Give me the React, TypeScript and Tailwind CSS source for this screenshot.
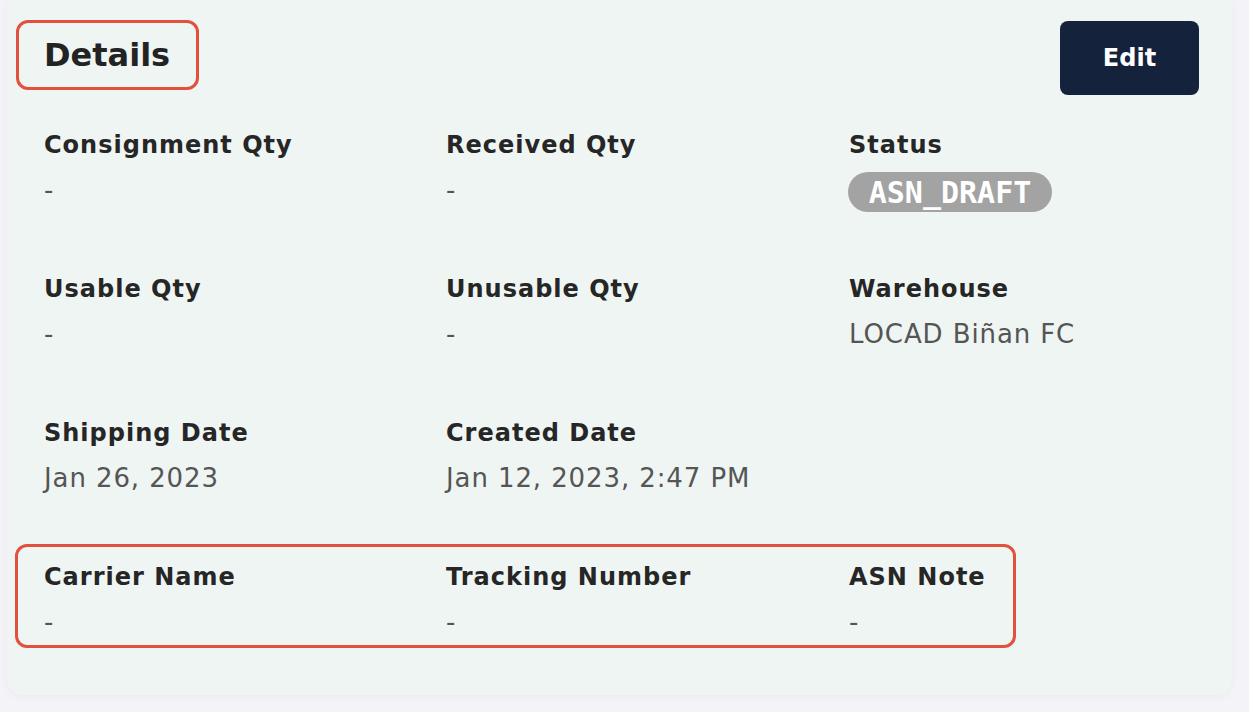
import React from "react";

type Field = { label: string; value?: string; badge?: string };

const fields: Field[] = [
  { label: "Consignment Qty", value: "-" },
  { label: "Received Qty", value: "-" },
  { label: "Status", badge: "ASN_DRAFT" },
  { label: "Usable Qty", value: "-" },
  { label: "Unusable Qty", value: "-" },
  { label: "Warehouse", value: "LOCAD Biñan FC" },
  { label: "Shipping Date", value: "Jan 26, 2023" },
  { label: "Created Date", value: "Jan 12, 2023, 2:47 PM" },
  { label: "", value: "" },
  { label: "Carrier Name", value: "-" },
  { label: "Tracking Number", value: "-" },
  { label: "ASN Note", value: "-" },
];

const App = () => {
  return (
    <div className="relative min-h-[712px] w-full overflow-hidden bg-[#f4f3f8] font-['DejaVu_Sans',sans-serif]">
      <div className="ml-[7px] w-[1225px] h-[695px] rounded-b-2xl bg-[#eff5f3] shadow-[0_2px_8px_rgba(0,0,0,0.04)] pl-[37px] pr-[33px] pt-[21px]">
        <div className="flex items-start justify-between">
          <h2 className="mt-[14px] text-[32px] leading-10 font-bold text-[#232323]">
            Details
          </h2>
          <button className="h-[74px] w-[139px] rounded-lg bg-[#15223b] text-[24px] font-bold text-white">
            Edit
          </button>
        </div>

        <div className="mt-[34px] grid grid-cols-[402px_403px_1fr] auto-rows-[144px]">
          {fields.map((f, idx) => (
            <div key={idx} className="flex flex-col">
              {f.label && (
                <span className="h-8 text-[24px] leading-8 tracking-[1px] font-bold text-[#262626]">
                  {f.label}
                </span>
              )}
              {f.badge ? (
                <span className="mt-[11px] -ml-px flex h-10 w-[204px] items-center justify-center rounded-full bg-[#a3a3a3] font-['DejaVu_Sans_Mono',monospace] text-[30px] font-bold text-white">
                  {f.badge}
                </span>
              ) : (
                f.value && (
                  <span className="mt-[11px] h-9 text-[26px] leading-9 tracking-[0.9px] text-[#555555]">
                    {f.value}
                  </span>
                )
              )}
            </div>
          ))}
        </div>
      </div>

      <div className="absolute left-[16px] top-[20px] h-[70px] w-[183px] rounded-[12px] border-[3px] border-[#e2513d]" />
      <div className="absolute left-[15px] top-[544px] h-[104px] w-[1001px] rounded-[12px] border-[3px] border-[#e2513d]" />
    </div>
  );
};

export default App;
